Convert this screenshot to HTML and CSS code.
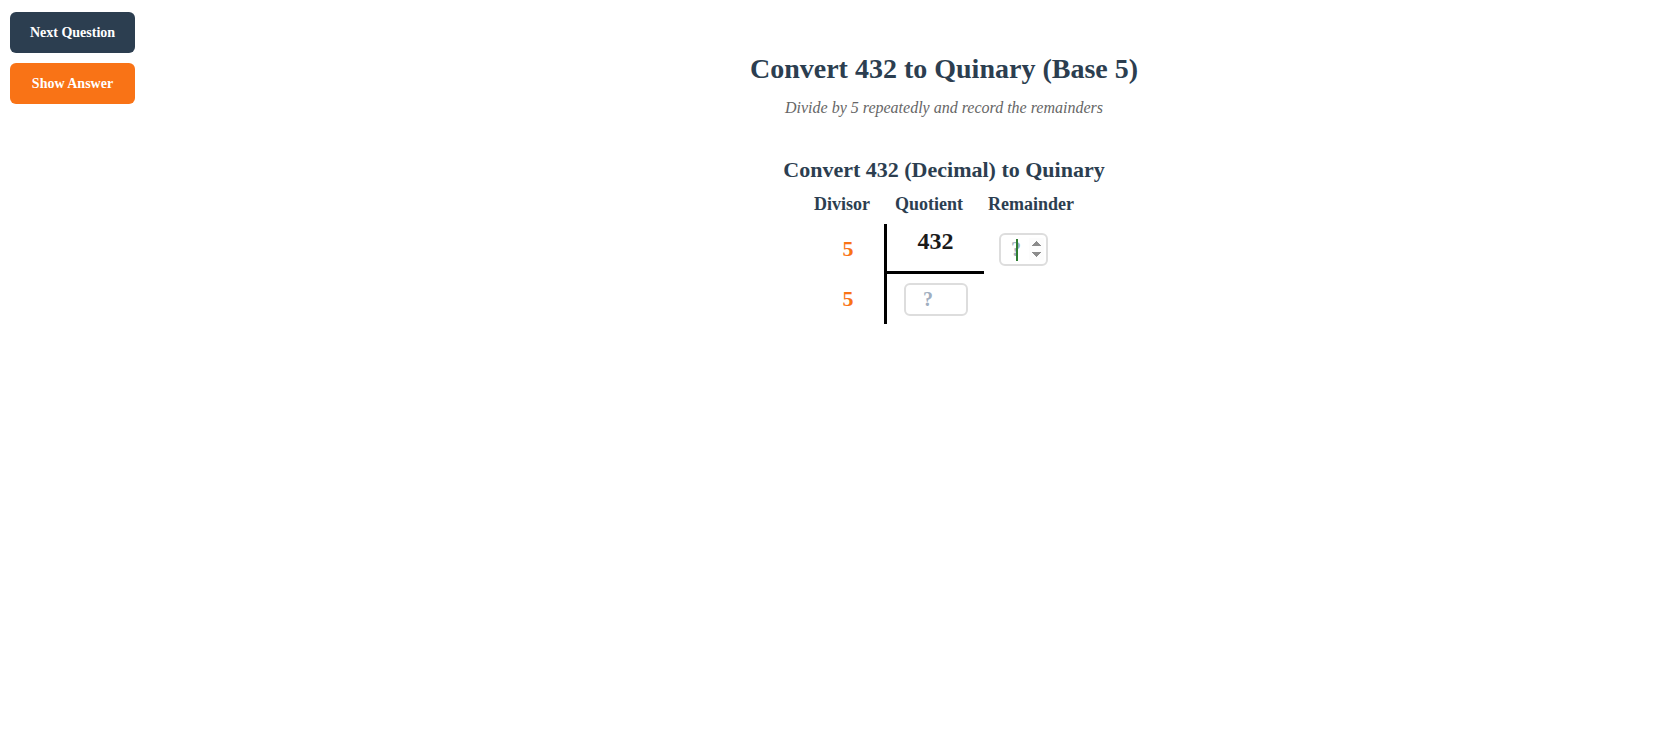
FILE: index.html
```html
<!DOCTYPE html>
<html lang="en">
<head>
<meta charset="utf-8">
<title>Convert 432 to Quinary</title>
<link rel="stylesheet" href="styles.css">
</head>
<body>
<div class="page">
  <aside class="sidebar">
    <button class="btn btn-dark">Next Question</button>
    <button class="btn btn-orange">Show Answer</button>
  </aside>
  <main class="main">
    <h1 class="title">Convert 432 to Quinary (Base 5)</h1>
    <p class="subtitle">Divide by 5 repeatedly and record the remainders</p>
    <h2 class="heading">Convert 432 (Decimal) to Quinary</h2>
    <div class="col-heads">
      <span>Divisor</span>
      <span>Quotient</span>
      <span>Remainder</span>
    </div>
    <div class="division">
      <div class="cell divisor">5</div>
      <div class="cell quotient first">432</div>
      <div class="cell remainder">
        <span class="field">
          <input class="answer answer-rem" type="number" placeholder="?">
          <span class="caret"></span>
        </span>
      </div>
      <div class="cell divisor">5</div>
      <div class="cell quotient">
        <input class="answer answer-quo" type="number" placeholder="?">
      </div>
      <div class="cell remainder"></div>
    </div>
  </main>
</div>
</body>
</html>
```

FILE: styles.css
```css
* { box-sizing: border-box; }

html, body {
  margin: 0;
  padding: 0;
  background: #ffffff;
}

body {
  font-family: "Liberation Serif", "Times New Roman", serif;
  color: #2c3e50;
}

.page {
  display: flex;
  min-height: 753px;
}

.sidebar {
  width: 224px;
  flex: 0 0 224px;
  padding: 12px 0 0 10px;
  display: flex;
  flex-direction: column;
  align-items: flex-start;
  gap: 10px;
}

.btn {
  width: 125px;
  height: 41px;
  border: none;
  border-radius: 6px;
  color: #ffffff;
  font-family: "Liberation Serif", "Times New Roman", serif;
  font-weight: bold;
  font-size: 14px;
  padding: 1px 0 0;
  cursor: pointer;
}

.btn-dark { background: #2c3e50; }
.btn-orange { background: #f97316; }

.main {
  flex: 1;
  text-align: center;
  padding-top: 53px;
}

.title {
  margin: 0;
  font-size: 28px;
  line-height: 32px;
  font-weight: bold;
  color: #2c3e50;
}

.subtitle {
  margin: 13px 0 0;
  font-size: 16px;
  line-height: 19px;
  font-style: italic;
  color: #666666;
}

.heading {
  margin: 40px 0 0;
  font-size: 22px;
  line-height: 26px;
  font-weight: bold;
  color: #2c3e50;
}

.col-heads {
  margin-top: 11px;
  display: flex;
  justify-content: center;
  gap: 25px;
  font-size: 18px;
  line-height: 21px;
  font-weight: bold;
  color: #2c3e50;
}

.division {
  margin: 9px auto 0;
  width: 264px;
  display: grid;
  grid-template-columns: 72px 100px 92px;
  grid-auto-rows: 50px;
}

.cell {
  display: flex;
  align-items: center;
}

.divisor {
  justify-content: center;
  color: #f97316;
  font-size: 22px;
  font-weight: bold;
}

.quotient {
  justify-content: center;
  border-left: 3px solid #000000;
  font-size: 24px;
  font-weight: bold;
  color: #1a1a1a;
}

.quotient.first {
  align-items: flex-start;
  padding-top: 4px;
  border-bottom: 3px solid #000000;
}

.remainder {
  padding-left: 15px;
}

.field {
  position: relative;
  display: inline-block;
}

.answer {
  display: block;
  height: 33px;
  border: 2px solid #dddddd;
  border-radius: 6px;
  background: #ffffff;
  font-family: "Liberation Serif", "Times New Roman", serif;
  font-size: 20px;
  font-weight: bold;
  text-align: center;
  color: #2c3e50;
  caret-color: #2e7d32;
  padding: 0 2px;
  outline: none;
}

.answer::placeholder {
  color: #a0aec0;
}

.answer-rem { width: 49px; }
.answer-quo { width: 64px; }

.answer-rem::-webkit-inner-spin-button {
  opacity: 1;
}

.caret {
  position: absolute;
  left: 17px;
  top: 6px;
  width: 2px;
  height: 22px;
  background: #2e7d32;
}
```
